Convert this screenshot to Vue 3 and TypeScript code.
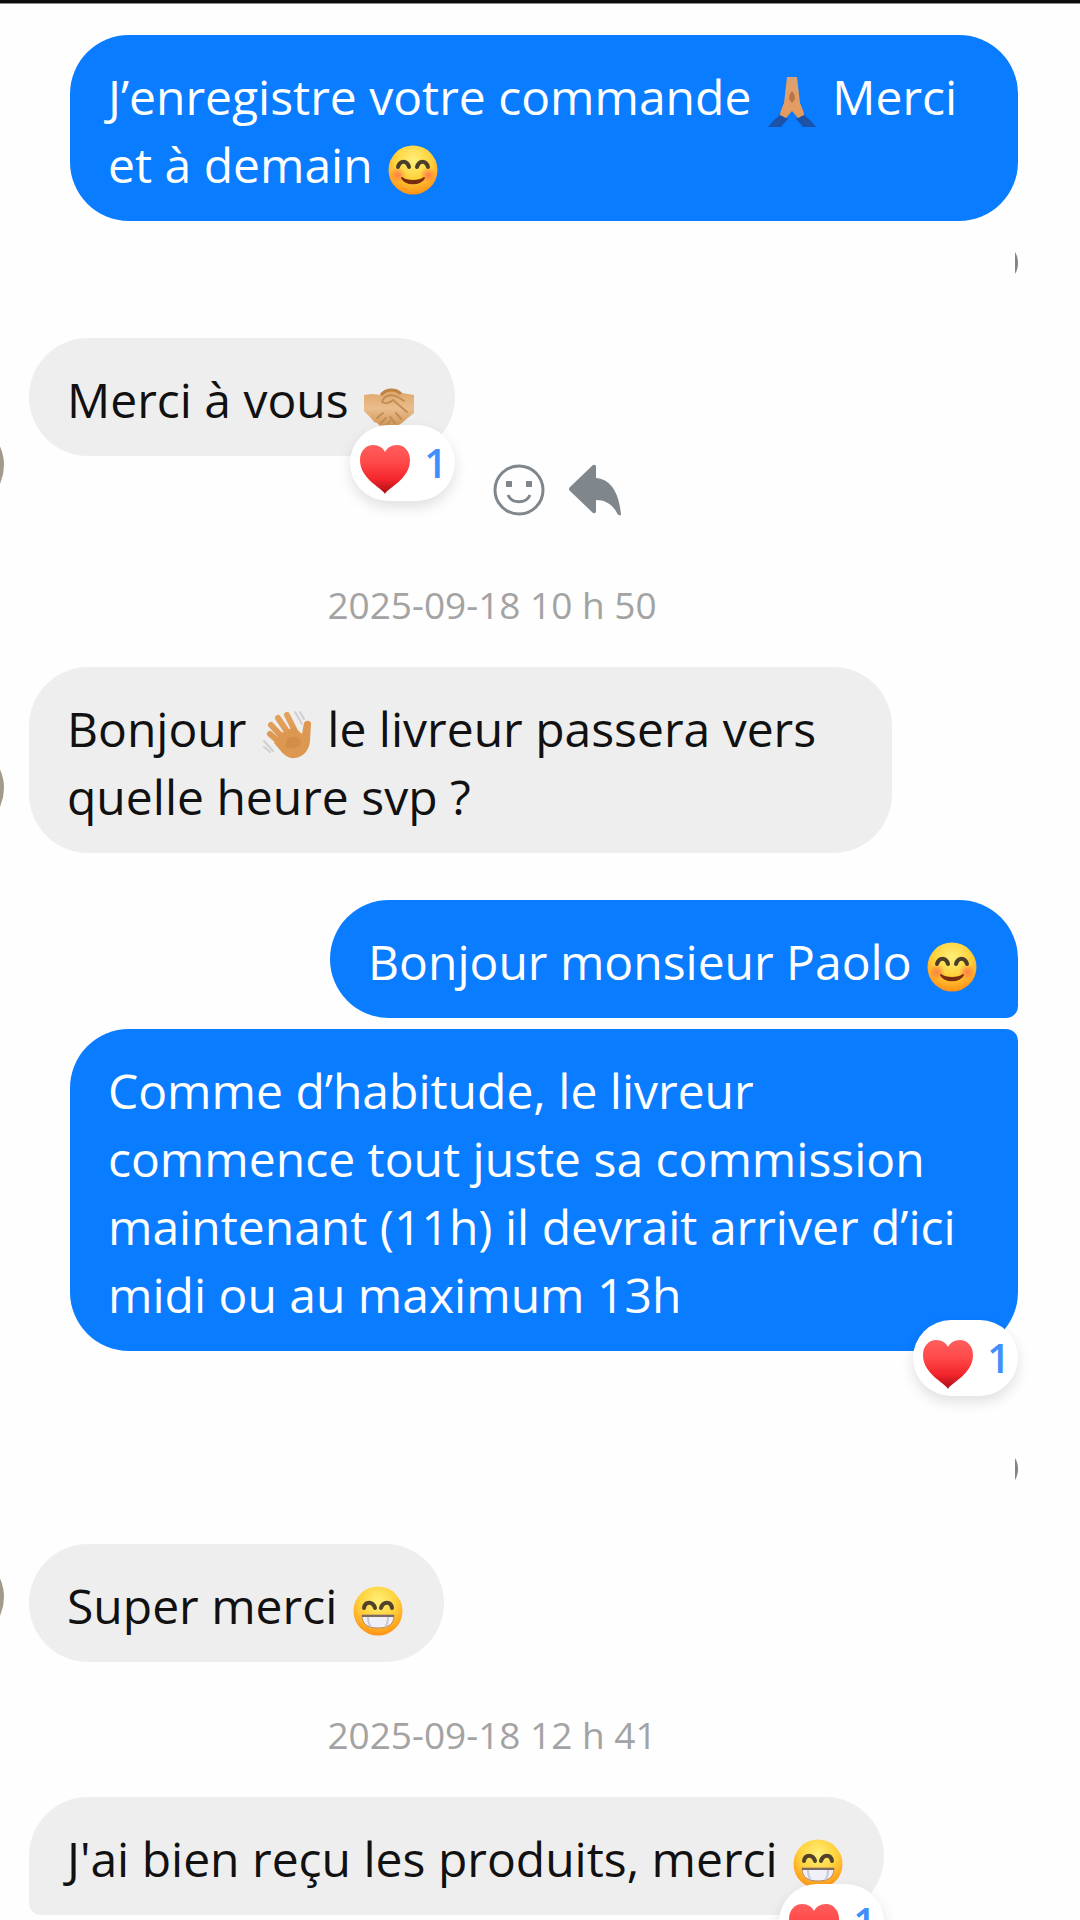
<script setup lang="ts">
import { defineComponent, h } from 'vue'

type EmojiName = 'pray' | 'smile' | 'shake' | 'wave' | 'grin' | 'heart'

interface Part {
  text?: string
  emoji?: EmojiName
}

interface Item {
  kind: 'in' | 'out' | 'time' | 'status'
  parts?: Part[]
  label?: string
  reactions?: number
  avatar?: boolean
  actions?: boolean
  first?: boolean
  last?: boolean
  turn?: boolean
}

const labels: Record<EmojiName, string> = {
  pray: 'Mains jointes',
  smile: 'Visage souriant',
  shake: 'Poignée de main',
  wave: 'Signe de la main',
  grin: 'Large sourire',
  heart: 'Cœur rouge',
}

const drawings: Record<EmojiName, string> = {
  pray: `
    <path d="M14 37 21 42 14 50H1l6-7z" fill="#1c53a8"/><path d="M36 37 29 42 36 50h13l-6-7z" fill="#1c53a8"/>
    <path d="M20 0c2-1 8-1 10 0 1 8 2 18 3 26 2 5 4 9 4 12l-6 3-6-7-6 7-6-3c0-3 2-7 4-12 1-8 2-18 3-26z" fill="url(#skin)"/>
    <path d="M25 14c-4 5-4 8 0 12 4-4 4-7 0-12z" fill="#b87543"/>`,
  smile: `
    <circle cx="25" cy="25" r="24.500" fill="url(#face)"/>
    <circle cx="10" cy="30" r="8" fill="url(#blush)"/><circle cx="40" cy="30" r="8" fill="url(#blush)"/>
    <path d="M10 22c2-7 9-7 11 0M29 22c2-7 9-7 11 0" fill="none" stroke="#4b3d2b" stroke-width="4" stroke-linecap="round"/>
    <path d="M14 33c5 4 17 4 22 0-4 7-18 7-22 0z" fill="#7a2c10" stroke="#7a2c10" stroke-width="2" stroke-linejoin="round"/>`,
  shake: `
    <path d="M0 15 8 14l9 1 8-5c5-2 9-1 13 3l12 2v18l-5 4-7 6-5 3-4-1-4 2-4 1-5-2-3-3-3-1-3-4L0 31z" fill="url(#pale)"/>
    <path d="M18 22c2-6 8-9 16-5l6 4M18 22c5 3 9 0 11-2l14 12M32 33l5 6M26 37l5 6M13 38l6-5M17 43l5-5M22 46l4-5" fill="none" stroke="#c48d55" stroke-width="2" stroke-linecap="round"/>
    <path d="M17 15c5-6 14-7 20-1" fill="none" stroke="#c08144" stroke-width="3"/>`,
  wave: `
    <g fill="none" stroke="url(#tan)" stroke-linecap="round" stroke-width="6"><path d="M9 16 23 31"/><path d="M16 9 28 27"/><path d="M25 6 34 24"/><path d="M8 25 23 38"/></g>
    <path d="M17 25 32 18l8 7 2-11c1-3 6-3 7 0l-1 18c-1 10-7 16-15 17-6 1-11-3-15-8l-6-7z" fill="#dc9850"/>
    <path d="M25 30c7-5 14-1 14 5-4 4-10 6-16 3" fill="#c98241" opacity=".5"/>
    <path d="m33 3 7 12M38 3l4 7M2 32l9 10M2 38l6 5" fill="none" stroke="#cfcfcf" stroke-width="2" stroke-linecap="round"/>`,
  grin: `
    <circle cx="25" cy="25" r="24.500" fill="url(#face)"/>
    <path d="M11 22c1-7 9-7 11 0M28 22c2-7 10-7 11 0" fill="none" stroke="#51422c" stroke-width="4" stroke-linecap="round"/>
    <path d="M9 29h32c0 9-5 13-16 13S9 38 9 29z" fill="#f0f0f8" stroke="#b98a62" stroke-width="1"/>
    <path d="M9 30h32" stroke="#7d6a60" stroke-width="2"/><path d="M15 31c0 5 1 8 3 10M35 31c0 5-1 8-3 10" fill="none" stroke="#c9c6d4" stroke-width="2"/>`,
  heart: `
    <path d="M25 50C22 44 0 35 0 16 0 7 6 1 13 1c6 0 10 3 12 7 2-4 6-7 12-7 7 0 13 6 13 15 0 19-22 28-25 34z" fill="url(#red)"/>`,
}

const Emoji = defineComponent({
  props: { name: { type: String, required: true } },
  setup(props) {
    return () =>
      h('svg', {
        viewBox: '0 0 50 50',
        role: 'img',
        'aria-label': labels[props.name as EmojiName],
        innerHTML: drawings[props.name as EmojiName],
      })
  },
})

const items: Item[] = [
  {
    kind: 'out',
    parts: [{ text: 'J’enregistre votre commande ' }, { emoji: 'pray' }, { text: ' Merci et à demain ' }, { emoji: 'smile' }],
  },
  { kind: 'status' },
  { kind: 'in', parts: [{ text: 'Merci à vous ' }, { emoji: 'shake' }], reactions: 1, avatar: true, actions: true },
  { kind: 'time', label: '2025-09-18 10 h 50' },
  {
    kind: 'in',
    parts: [{ text: 'Bonjour ' }, { emoji: 'wave' }, { text: ' le livreur passera vers quelle heure svp ?' }],
    avatar: true,
  },
  { kind: 'out', parts: [{ text: 'Bonjour monsieur Paolo ' }, { emoji: 'smile' }], first: true, turn: true },
  {
    kind: 'out',
    parts: [
      {
        text: 'Comme d’habitude, le livreur commence tout juste sa commission maintenant (11h) il devrait arriver d’ici midi ou au maximum 13h',
      },
    ],
    reactions: 1,
    last: true,
  },
  { kind: 'status' },
  { kind: 'in', parts: [{ text: 'Super merci ' }, { emoji: 'grin' }], avatar: true },
  { kind: 'time', label: '2025-09-18 12 h 41' },
  { kind: 'in', parts: [{ text: "J'ai bien reçu les produits, merci " }, { emoji: 'grin' }], reactions: 1, first: true },
]
</script>

<template>
  <main class="chat">
    <svg class="defs" aria-hidden="true">
      <defs>
        <radialGradient id="face" cx=".5" cy=".3" r=".75">
          <stop offset="0" stop-color="#fff07a" /><stop offset=".5" stop-color="#ffd23c" /><stop offset="1" stop-color="#ff8710" />
        </radialGradient>
        <radialGradient id="blush"><stop offset="0" stop-color="#ff6a4a" stop-opacity=".8" /><stop offset="1" stop-color="#ff6a4a" stop-opacity="0" /></radialGradient>
        <linearGradient id="skin" x2="0" y2="1"><stop offset="0" stop-color="#dba274" /><stop offset="1" stop-color="#e59a5b" /></linearGradient>
        <linearGradient id="pale" x2="0" y2="1"><stop offset="0" stop-color="#dda566" /><stop offset=".5" stop-color="#eabd8d" /><stop offset="1" stop-color="#cf9351" /></linearGradient>
        <linearGradient id="tan" gradientUnits="userSpaceOnUse" x2="0" y2="50"><stop offset="0" stop-color="#e5a45f" /><stop offset="1" stop-color="#d8914a" /></linearGradient>
        <linearGradient id="red" x2="0" y2="1"><stop offset="0" stop-color="#ff5e5e" /><stop offset=".35" stop-color="#ff4a4a" /><stop offset=".7" stop-color="#f3262c" /><stop offset="1" stop-color="#a80d16" /></linearGradient>
      </defs>
    </svg>
    <div class="edge"></div>
    <section class="thread">
      <template v-for="(item, i) in items" :key="i">
        <time v-if="item.kind === 'time'" class="stamp">{{ item.label }}</time>
        <div v-else-if="item.kind === 'status'" class="status" role="img" aria-label="Vu">
          <svg viewBox="0 0 4 26"><path d="M1 2C5 8 5 18 1 24z" fill="#7e858b" /></svg>
        </div>
        <article v-else class="row" :class="[item.kind, { reacted: item.reactions, turn: item.turn, joined: item.last }]">
          <span v-if="item.kind === 'in'" class="avatar" :class="{ blank: !item.avatar }"></span>
          <div class="holder">
            <p class="bubble" :class="{ first: item.first, last: item.last }"><template v-for="(part, j) in item.parts" :key="j"><Emoji v-if="part.emoji" class="emoji" :name="part.emoji" /><template v-else>{{ part.text }}</template></template></p>
            <button v-if="item.reactions" class="pill" type="button">
              <Emoji class="mark" name="heart" /><span>{{ item.reactions }}</span>
            </button>
          </div>
          <div v-if="item.actions" class="actions">
            <button type="button" aria-label="Réagir">
              <svg viewBox="0 0 52 52" fill="none" stroke="#7f878d" stroke-width="3">
                <circle cx="26" cy="26" r="24" />
                <path d="M15 31c4 9 18 9 22 0" />
                <path d="M13 20h6M33 20h6" stroke-width="6" />
              </svg>
            </button>
            <button type="button" aria-label="Répondre">
              <svg viewBox="0 0 52 52"><path d="M24 1q3-1 3 2v11c13 1 23 12 25 37q-3 1-4-2C43 40 36 36 27 36v11q0 3-3 2L1 27q-2-2 0-4z" fill="#7f878d" /></svg>
            </button>
          </div>
        </article>
      </template>
    </section>
  </main>
</template>

<style>
body {
  background: #fff;
}
</style>

<style scoped>
.chat {
  height: 100vh;
  overflow: hidden;
  background: #fefefe;
  color: #111;
  font-family: 'Open Sans', 'Noto Sans', sans-serif;
  font-size: 48px;
  line-height: 68px;
}
.defs {
  position: absolute;
  width: 0;
  height: 0;
}
.edge {
  height: 3px;
  background: #0c0c0c;
  border-bottom: 1px solid #8d8d8d;
}
.thread {
  display: flex;
  flex-direction: column;
  padding: 31px 62px 0 0;
}
.row {
  display: flex;
}
.row.out {
  justify-content: flex-end;
}
.row.turn {
  margin-top: 47px;
}
.row.joined {
  margin-top: 11px;
}
.row.reacted {
  padding-bottom: 76px;
}
.avatar {
  flex: none;
  align-self: flex-end;
  width: 90px;
  height: 90px;
  margin: 0 25px 20px -86px;
  border-radius: 50%;
  background: #a39a8b;
}
.reacted .avatar {
  margin-bottom: -54px;
}
.avatar.blank {
  visibility: hidden;
}
.holder {
  position: relative;
}
.bubble {
  margin: 0;
  padding: 28px 38px 22px;
  border-radius: 59px;
}
.in .bubble {
  max-width: 787px;
  background: #eee;
}
.out .bubble {
  max-width: 872px;
  background: #0a7cff;
  color: #fff;
}
.out .first {
  border-bottom-right-radius: 12px;
}
.out .last {
  border-top-right-radius: 12px;
}
.in .first {
  border-bottom-left-radius: 12px;
}
.emoji {
  width: 50px;
  height: 50px;
  margin: 0 3px;
  vertical-align: -12px;
}
button {
  border: 0;
  padding: 0;
  background: none;
  font: inherit;
}
.pill {
  position: absolute;
  right: 0;
  bottom: -45px;
  display: flex;
  align-items: center;
  gap: 14px;
  height: 76px;
  padding: 0 8px 0 10px;
  border-radius: 38px;
  background: #fff;
  box-shadow: 0 6px 14px rgba(0, 0, 0, 0.12);
  color: #3f8ffc;
  font-size: 40px;
  font-weight: 600;
}
.mark {
  width: 50px;
  height: 50px;
  margin-top: 12px;
}
.actions {
  display: flex;
  align-self: flex-end;
  gap: 24px;
  margin: 0 0 -60px 38px;
}
.actions svg {
  display: block;
  width: 52px;
  height: 52px;
}
.stamp {
  margin: 48px 34px 37px 0;
  color: #a3a3a3;
  font-size: 37px;
  line-height: 50px;
  text-align: center;
}
.status {
  align-self: flex-end;
  width: 4px;
  height: 26px;
  margin: 29px 0 62px;
}
.status svg {
  display: block;
  width: 4px;
  height: 26px;
}
</style>
